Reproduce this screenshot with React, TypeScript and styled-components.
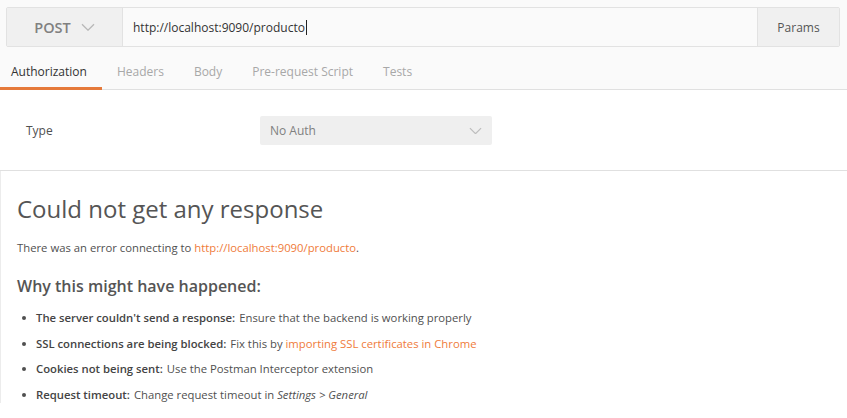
import React from "react";
import styled, { createGlobalStyle } from "styled-components";

const Global = createGlobalStyle`
  html, body { margin: 0; padding: 0; background: #ffffff; }
  body { font-family: "Open Sans", "Noto Sans", sans-serif; color: #505050; }
  * { box-sizing: border-box; }
`;

const Page = styled.div`
  width: 847px;
  height: 418px;
  overflow: hidden;
  background: #fff;
`;

const Header = styled.div`
  background: #fafafa;
  padding: 7px 7px 0 6px;
`;

const UrlBar = styled.div`
  display: flex;
  height: 40px;
  border: 1px solid #e2e2e2;
  border-radius: 2px;
  background: #fafafa;
`;

const Method = styled.div`
  width: 116px;
  display: flex;
  align-items: center;
  justify-content: center;
  gap: 10px;
  background: #f0f0f0;
  border-right: 1px solid #e2e2e2;
  font-size: 14.5px;
  font-weight: 600;
  color: #808080;
`;

const UrlInput = styled.div`
  flex: 1;
  display: flex;
  align-items: center;
  padding-left: 10px;
  font-size: 12px;
  color: #333;
`;

const Caret = styled.span`
  display: inline-block;
  width: 1px;
  height: 15px;
  background: #222;
  margin-left: 1px;
`;

const ParamsButton = styled.div`
  width: 82px;
  display: flex;
  align-items: center;
  justify-content: center;
  background: #f0f0f0;
  border-left: 1px solid #e2e2e2;
  font-size: 12px;
  color: #555;
`;

const TabBar = styled.div`
  display: flex;
  margin: 9px -7px 0 -6px;
  border-bottom: 1px solid #e0e0e0;
  height: 34px;
`;

const Tab = styled.div<{ $active?: boolean; $first?: boolean }>`
  display: flex;
  align-items: center;
  padding: 0 15px 0 ${(p) => (p.$first ? "11px" : "15px")};
  font-size: 12px;
  color: ${(p) => (p.$active ? "#333" : "#a8a8a8")};
  border-bottom: 3px solid ${(p) => (p.$active ? "#e5793a" : "transparent")};
  margin-bottom: -1px;
`;

const AuthSection = styled.div`
  display: flex;
  align-items: center;
  padding: 26px 26px 25px;
  border-bottom: 1px solid #e0e0e0;
`;

const Label = styled.div`
  width: 234px;
  font-size: 12px;
  color: #505050;
`;

const Select = styled.div`
  width: 232px;
  height: 29px;
  display: flex;
  align-items: center;
  justify-content: space-between;
  padding: 0 10px 0 10px;
  background: #efefef;
  border-radius: 2px;
  font-size: 12px;
  color: #808080;
`;

const Response = styled.div`
  padding: 22px 16px 0 16px;
  border-left: 1px solid #ececec;
`;

const Title = styled.h1`
  margin: 0;
  font-size: 24px;
  font-weight: 400;
  color: #555;
  line-height: 32px;
`;

const Message = styled.p`
  margin: 15px 0 0;
  font-size: 11.3px;
  color: #505050;
  line-height: 16px;
`;

const Link = styled.span`
  color: #ef7b3a;
`;

const SubTitle = styled.h2`
  margin: 18px 0 0;
  font-size: 16px;
  font-weight: 600;
  color: #555;
  line-height: 24px;
`;

const List = styled.ul`
  margin: 12px 0 0;
  padding: 0;
  list-style: none;
  display: flex;
  flex-direction: column;
  gap: 9.6px;
`;

const Item = styled.li`
  display: flex;
  align-items: center;
  font-size: 11.3px;
  line-height: 16px;
  color: #505050;
  &::before {
    content: "";
    width: 4px;
    height: 4px;
    border-radius: 50%;
    background: #505050;
    margin: 0 10px 0 5px;
  }
`;

const Strong = styled.b`
  font-weight: 600;
  color: #444;
  margin-right: 4px;
`;

const Chevron = ({ color = "#b5b5b5", size = 14 }: { color?: string; size?: number }) => (
  <svg width={size} height={size * 0.6} viewBox="0 0 14 8" fill="none">
    <path d="M1 1l6 6 6-6" stroke={color} strokeWidth="1.3" />
  </svg>
);

export default function App() {
  return (
    <Page>
      <Global />
      <Header>
        <UrlBar>
          <Method>
            POST
            <Chevron color="#b8b8b8" size={14} />
          </Method>
          <UrlInput>
            http://localhost:9090/producto
            <Caret />
          </UrlInput>
          <ParamsButton>Params</ParamsButton>
        </UrlBar>
        <TabBar>
          <Tab $active $first>Authorization</Tab>
          <Tab>Headers</Tab>
          <Tab>Body</Tab>
          <Tab>Pre-request Script</Tab>
          <Tab>Tests</Tab>
        </TabBar>
      </Header>
      <AuthSection>
        <Label>Type</Label>
        <Select>
          No Auth
          <Chevron color="#bdbdbd" size={13} />
        </Select>
      </AuthSection>
      <Response>
        <Title>Could not get any response</Title>
        <Message>
          There was an error connecting to <Link>http://localhost:9090/producto</Link>.
        </Message>
        <SubTitle>Why this might have happened:</SubTitle>
        <List>
          <Item>
            <Strong>The server couldn't send a response:</Strong> Ensure that the backend is working properly
          </Item>
          <Item>
            <Strong>SSL connections are being blocked:</Strong> Fix this by&nbsp;<Link>importing SSL certificates in Chrome</Link>
          </Item>
          <Item>
            <Strong>Cookies not being sent:</Strong> Use the Postman Interceptor extension
          </Item>
          <Item>
            <Strong>Request timeout:</Strong> Change request timeout in&nbsp;<i>Settings &gt; General</i>
          </Item>
        </List>
      </Response>
    </Page>
  );
}
